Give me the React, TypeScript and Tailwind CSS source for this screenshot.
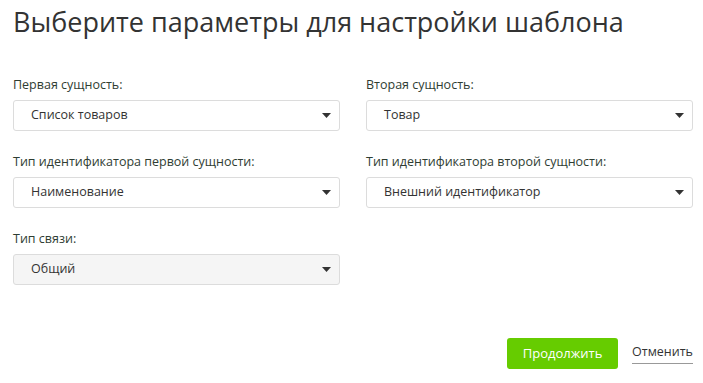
import React from "react";

function Select({ value, gray = false }: { value: string; gray?: boolean }) {
  return (
    <div
      className={`flex h-[31px] items-center justify-between rounded-[3px] border border-[#dcdcdc] pl-[17px] pr-[7px] ${
        gray ? "bg-[#f5f5f5]" : "bg-white"
      }`}
    >
      <span className="text-[12.5px] text-[#333]">{value}</span>
      <svg width="9" height="5" viewBox="0 0 9 5" className="mr-[1px]">
        <path d="M0 0 L9 0 L4.5 5 Z" fill="#333" />
      </svg>
    </div>
  );
}

function Field({ label, value, gray }: { label: string; value: string; gray?: boolean }) {
  return (
    <div className="flex flex-col">
      <div className="mb-[7px] text-[12.5px] leading-[17px] text-[#2f3d33]">{label}</div>
      <Select value={value} gray={gray} />
    </div>
  );
}

export default function App() {
  return (
    <div
      className="h-[383px] w-[703px] bg-white pl-[13px] pr-[10px]"
      style={{ fontFamily: "'Open Sans', sans-serif" }}
    >
      <h1 className="pt-[4px] text-[27px] leading-[36px] text-[#333]">
        Выберите параметры для настройки шаблона
      </h1>
      <div className="mt-[36px] grid grid-cols-2 gap-x-[26px] gap-y-[22px]">
        <Field label="Первая сущность:" value="Список товаров" />
        <Field label="Вторая сущность:" value="Товар" />
        <Field label="Тип идентификатора первой сущности:" value="Наименование" />
        <Field label="Тип идентификатора второй сущности:" value="Внешний идентификатор" />
        <Field label="Тип связи:" value="Общий" gray />
      </div>
      <div className="mt-[53px] flex items-center justify-end gap-[14px]">
        <button className="h-[31px] w-[111px] rounded-[3px] bg-[#66cc00] text-[13px] text-white">
          Продолжить
        </button>
        <span className="border-b border-[#999] pb-[3px] text-[12.5px] leading-[17px] text-[#333]">
          Отменить
        </span>
      </div>
    </div>
  );
}
